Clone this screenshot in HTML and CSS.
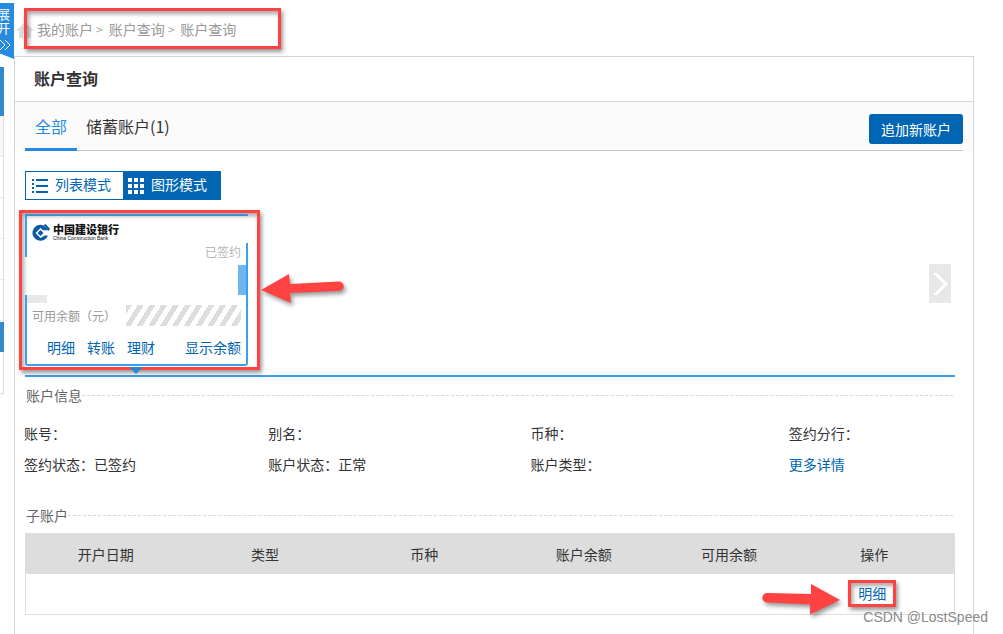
FILE: index.html
```html
<!DOCTYPE html>
<html lang="zh-CN">
<head>
<meta charset="utf-8">
<title>账户查询</title>
<link rel="stylesheet" href="styles.css">
</head>
<body>
<aside class="rail">
  <button class="expand" type="button"><span>展</span><span>开</span>
    <svg width="12" height="12" viewBox="0 0 12 12" fill="none" stroke="#fff"><path d="M0 1l5 5-5 5M5 1l5 5-5 5"/></svg>
  </button>
  <div class="rail-head"></div>
  <div class="rail-list"><i class="shade"></i><i></i><i></i><i></i><i></i></div>
  <div class="rail-active"></div>
  <div class="rail-end"></div>
</aside>
<main class="main">
  <nav class="crumbs callout">
    <svg class="home" width="18" height="16" viewBox="0 0 18 16"><path fill="#dedede" d="M9 0l9 9h-3v7h-4v-5H7v5H3V9H0z"/></svg>
    <a href="#">我的账户</a><span class="sep">&gt;</span><a href="#">账户查询</a><span class="sep">&gt;</span><a href="#">账户查询</a>
  </nav>
  <section class="panel">
    <h1 class="title">账户查询</h1>
    <div class="tabs-band">
      <div class="tabs">
        <button class="tab tab-on" type="button">全部</button>
        <button class="tab" type="button">储蓄账户(1)</button>
        <button class="add" type="button">追加新账户</button>
      </div>
    </div>
    <div class="content">
      <div class="modes">
        <button class="mode" type="button">
          <svg width="16" height="14" viewBox="0 0 16 14" fill="#0066b3"><path d="M0 0h2v2H0zM4 0h12v2H4zM0 4h2v2H0zM4 6h12v2H4zM0 8h2v2H0zM0 12h2v2H0zM4 12h12v2H4z"/></svg><span>列表模式</span></button>
        <button class="mode mode-on" type="button">
          <svg width="16" height="16" viewBox="0 0 16 16" fill="#fff"><path d="M0 0h4v4H0zM6 0h4v4H6zM12 0h4v4h-4zM0 6h4v4H0zM6 6h4v4H6zM12 6h4v4h-4zM0 12h4v4H0zM6 12h4v4H6zM12 12h4v4h-4z"/></svg><span>图形模式</span></button>
      </div>
      <div class="carousel">
        <div class="card-mark callout">
          <article class="card">
            <header class="bank">
              <svg width="18" height="17" viewBox="0 0 18 17"><path fill="#0b5aa5" fill-rule="evenodd" d="M11 1.200A8 8 0 1 0 16 11.500h-3.200L8.500 14 3.500 9 8.500 4l2.500 2.300h5L13 3.300zM8.500 6L5.500 9l3 3 3-3z"/><path fill="#0b5aa5" d="M11.500 1.500L13.500 0 18 4.800 16.500 7z"/></svg>
              <div class="bank-name"><strong>中国建设银行</strong><small>China Construction Bank</small></div>
            </header>
            <p class="signed">已签约</p>
            <i class="side-tag"></i>
            <i class="mask"></i>
            <div class="balance"><span>可用余额（元）</span><i class="hatch"></i></div>
            <div class="card-links"><a href="#">明细</a><a href="#">转账</a><a href="#">理财</a><a class="show" href="#">显示余额</a></div>
          </article>
          <i class="caret"></i>
          <svg class="arrow arrow-left" width="90" height="40" viewBox="0 0 90 40"><path fill="#ff4343" d="M1 20L29 4l1 10 49-2.500a4.700 4.700 0 0 1 0 9.500l-49 2 1 10z"/></svg>
        </div>
        <button class="next" type="button" aria-label="下一页"><svg width="15" height="22" viewBox="0 0 15 22"><path fill="#fff" d="M0 0h4l11 11L4 22H0l11-11z"/></svg></button>
      </div>
      <h2 class="section">账户信息</h2>
      <div class="info">
        <span>账号：</span><span>别名：</span><span>币种：</span><span>签约分行：</span>
        <span>签约状态：已签约</span><span>账户状态：正常</span><span>账户类型：</span><a href="#">更多详情</a>
      </div>
      <h2 class="section">子账户</h2>
      <table class="table">
        <colgroup><col class="wide"><col class="wide"><col class="wide"><col class="wide"><col class="slim"><col class="wide"></colgroup>
        <thead><tr><th>开户日期</th><th>类型</th><th>币种</th><th>账户余额</th><th>可用余额</th><th>操作</th></tr></thead>
        <tbody><tr><td></td><td></td><td></td><td></td><td></td><td class="ops"><div class="action"><a class="callout detail" href="#">明细</a>
          <svg class="arrow arrow-right" width="84" height="40" viewBox="0 0 84 40"><path fill="#ff4343" d="M79 20L50 4v10L6 13a4.700 4.700 0 0 0 0 9.500l43 2v10z"/></svg></div></td></tr></tbody>
      </table>
    </div>
  </section>
</main>
<div class="watermark">CSDN @LostSpeed</div>
</body>
</html>
```
FILE: styles.css
```css
* { box-sizing: border-box; }
body {
  margin: 0;
  min-height: 100vh;
  display: flex;
  position: relative;
  overflow-x: hidden;
  background: #fff;
  color: #333;
  font: 14px/20px "Noto Sans CJK SC", sans-serif;
}
a { color: #0066b3; text-decoration: none; }
button { font: inherit; padding: 0; border: 0; cursor: pointer; }
i { display: block; }
svg { flex: none; }
.callout { border: 3px solid #ff4343; box-shadow: 2px 3px 4px rgba(0,0,0,.4), inset 2px 3px 4px rgba(0,0,0,.35); }

.rail { width: 14px; flex: none; padding-top: 3px; overflow: hidden; }
.expand {
  width: 14px; height: 56px; margin-bottom: 8px; padding: 4px 0 0;
  display: flex; flex-direction: column; align-items: flex-start;
  background: #268bdf; color: #fff; font-size: 13px; line-height: 14px;
  clip-path: polygon(0 0, 100% 0, 100% 100%, 0 90%);
}
.expand span { margin-left: -3px; }
.expand svg { margin-top: 4px; }
.rail-head, .rail-active { width: 4px; background: #338acb; }
.rail-head { height: 49px; }
.rail-active { height: 30px; }
.rail-list { width: 4px; padding-bottom: 1px; border-right: 1px solid #ddd; }
.rail-list i { height: 41px; border-bottom: 1px dotted #ddd; }
.rail-list .shade { background: #f8f8f6; }
.rail-end { width: 4px; height: 42px; border: solid #ddd; border-width: 0 1px 1px 0; }

.main { flex: 1; min-width: 0; margin-right: 29px; display: flex; flex-direction: column; }
.crumbs {
  position: relative; align-self: flex-start; display: flex; align-items: center;
  height: 41px; margin: 8px 0 7px 10px; padding: 0 42px 0 10px; color: #999;
}
.crumbs a { color: #999; }
.sep { margin: 0 6px 0 3px; font-size: 12px; color: #aaa; }
.home { position: absolute; left: -11px; top: 11px; z-index: -1; }

.panel { flex: 1; border: 1px solid #d6d6d6; border-bottom: 0; }
.title { margin: 0; padding: 0 19px 2px; font-size: 16px; line-height: 42px; font-weight: 700; border-bottom: 1px solid #d6d6d6; }
.tabs-band { background: #fbfbfb; padding: 0 10px; }
.tabs { display: flex; align-items: center; height: 49px; border-bottom: 1px solid #c8c8c8; }
.tab { height: 50px; padding: 0 9px; background: none; color: #333; font-size: 16px; line-height: 50px; }
.tab-on { width: 52px; color: #268bdf; border-bottom: 3px solid #268bdf; }
.add { margin-left: auto; margin-top: 6px; width: 94px; height: 30px; padding-bottom: 1px; border-radius: 3px; background: #0066b3; color: #fff; }

.content { padding: 20px 18px 0 10px; }
.modes { display: inline-flex; height: 29px; border: 1px solid #0066b3; vertical-align: top; }
.mode { display: flex; align-items: center; gap: 7px; width: 97px; padding-left: 6px; background: #fff; color: #0066b3; }
.mode span { padding-bottom: 3px; }
.mode-on { background: #0066b3; color: #fff; padding-left: 5px; }

.carousel { display: flex; justify-content: space-between; align-items: center; margin-top: 10px; padding-bottom: 5px; border-bottom: 2px solid #3e9fea; }
.card-mark { position: relative; width: 241px; margin-left: -6px; padding: 0 9px 1px 3px; }
.card {
  position: relative; height: 153px; padding: 9px 7px 0; border-radius: 3px;
  background:
    linear-gradient(#3e8fd0, #3e8fd0) 0 1px / 100% 2px,
    linear-gradient(#3e9fea, #3e9fea) 0 100% / 100% 2px,
    linear-gradient(#3e9fea, #3e9fea) 0 0 / 2px 44px,
    linear-gradient(#3e9fea, #3e9fea) 0 100% / 2px 71px,
    linear-gradient(#3e9fea, #3e9fea) 100% 100% / 2px 123px;
  background-repeat: no-repeat;
}
.bank { display: flex; align-items: center; gap: 3px; height: 20px; }
.bank-name { display: flex; flex-direction: column; color: #111; }
.bank-name strong { font-size: 11px; line-height: 11px; font-weight: 900; }
.bank-name small { font: 5px/6px "Liberation Sans", sans-serif; }
.signed { margin: 0; text-align: right; font-size: 12px; color: #b5b5b5; }
.side-tag { position: absolute; right: 2px; top: 52px; width: 8px; height: 30px; background: #6cb7f1; }
.mask { position: absolute; left: 2px; top: 82px; width: 20px; height: 8px; background: #e8e8e8; }
.balance { display: flex; justify-content: space-between; align-items: center; margin-top: 43px; font-size: 12px; color: #999; }
.hatch { width: 115px; height: 21px; background: repeating-linear-gradient(122deg, #ddd 0 5px, #fff 5px 10px); }
.card-links { display: flex; gap: 12px; margin-top: 11px; padding-left: 15px; }
.show { margin-left: auto; }
.caret { position: absolute; left: 107px; bottom: -7px; border: solid transparent; border-width: 7px 7px 0; border-top-color: #2f86cc; }
.arrow { position: absolute; filter: drop-shadow(2px 3px 2px rgba(0,0,0,.4)); }
.arrow-left { left: 238px; top: 57px; }
.next { display: flex; align-items: center; justify-content: center; width: 22px; height: 39px; margin: 0 4px 13px 0; background: #e8e8e8; }

.section { display: flex; align-items: center; margin: 8px 2px 0 1px; font-size: 14px; line-height: 20px; font-weight: 400; color: #666; }
.section::after { content: ""; flex: 1; border-top: 1px dashed #d6d6d6; }
.info { display: grid; grid-template-columns: 244fr 262fr 258fr 166fr; row-gap: 11px; margin: 18px 0 31px -1px; }
.table { width: 100%; margin-top: 8px; border: 1px solid #ddd; border-collapse: separate; border-spacing: 0; table-layout: fixed; }
.wide { width: 17%; }
.slim { width: 14%; }
.table th { height: 40px; padding: 0; background: #ddd; font-weight: 400; }
.table td { height: 40px; padding: 0; text-align: center; }
.table .ops { padding: 0 4px 2px 0; }
.action { position: relative; display: inline-block; vertical-align: middle; }
.detail { display: block; padding: 0 7px; height: 27px; line-height: 20px; }
.arrow-right { right: 51px; top: 0; }
.watermark { position: absolute; right: 15px; bottom: 7px; font: 14px/20px "Liberation Sans", sans-serif; color: #8a8a8a; }
```
